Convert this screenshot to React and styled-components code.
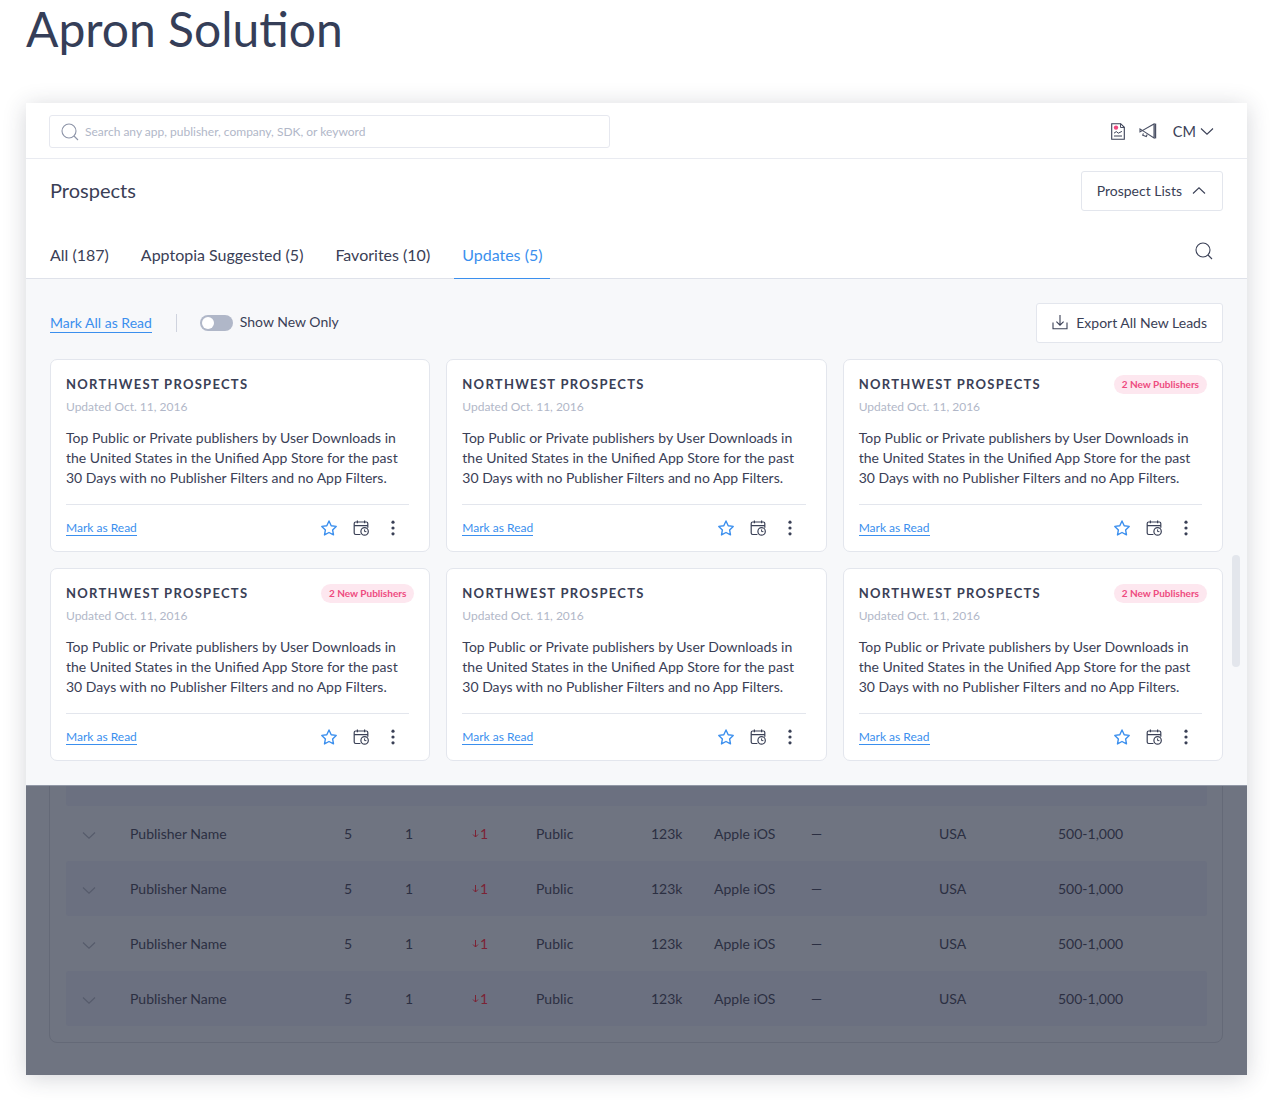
import React from 'react';
import styled, { createGlobalStyle } from 'styled-components';

const Global = createGlobalStyle`
  html, body { margin: 0; padding: 0; background: #fff; }
  body { font-family: Lato, "Open Sans", sans-serif; color: #3a4056; -webkit-font-smoothing: antialiased; }
  * { box-sizing: border-box; }
`;

const Page = styled.div`
  width: 1273px;
  height: 1100px;
  padding: 0 26px;
  overflow: hidden;
`;
const PageTitle = styled.h1`
  margin: 0;
  height: 103px;
  font-family: Lato, sans-serif;
  font-weight: 400;
  font-size: 48px;
  line-height: 58px;
  color: #353e58;
`;
const Frame = styled.div`
  position: relative;
  width: 1221px;
  height: 972px;
  background: #fff;
  box-shadow: 0 3px 22px rgba(40, 45, 65, 0.2);
  display: flex;
  flex-direction: column;
`;
const TopBar = styled.header`
  height: 56px;
  padding: 12px 33px 0 23px;
  border-bottom: 1px solid #e9ebf1;
  display: flex;
  justify-content: space-between;
  align-items: flex-start;
`;
const SearchBox = styled.div`
  width: 561px;
  height: 33px;
  border: 1px solid #e6e8ef;
  border-radius: 3px;
  padding-left: 11px;
  display: flex;
  align-items: center;
  gap: 6px;
  font-size: 12px;
  color: #b1b7c8;
`;
const TopActions = styled.div`
  display: flex;
  align-items: center;
  height: 32px;
  color: #3a4056;
  font-size: 14.5px;
`;
const IconSlot = styled.span`
  display: inline-flex;
  margin-right: ${p => p.$mr || 0}px;
  margin-left: ${p => p.$ml || 0}px;
`;
const TitleRow = styled.div`
  height: 65px;
  padding: 12px 24px 0 24px;
  display: flex;
  justify-content: space-between;
  align-items: flex-start;
`;
const SectionTitle = styled.h2`
  margin: 0;
  height: 40px;
  font-weight: 400;
  font-size: 20px;
  line-height: 38px;
  color: #3a4056;
`;
const OutlineButton = styled.button`
  height: 40px;
  padding: 0 ${p => p.$pr || 15}px 2px 15px;
  border: 1px solid #e3e6ed;
  border-radius: 3px;
  background: #fff;
  font-family: inherit;
  font-size: 14px;
  color: #3a4056;
  display: flex;
  align-items: center;
  gap: ${p => p.$gap || 8}px;
`;
const Tabs = styled.nav`
  height: 55px;
  padding: 0 24px 0 16px;
  border-bottom: 1px solid #dfe2ea;
  display: flex;
  align-items: stretch;
  gap: 16px;
`;
const Tab = styled.a`
  padding: 0 8px;
  height: 55px;
  line-height: 62px;
  font-size: 16px;
  color: ${p => (p.$active ? '#3b8fee' : '#3a4056')};
  border-bottom: ${p => (p.$active ? '1px solid #3b8fee' : '0')};
`;
const TabSearch = styled.span`
  margin-left: auto;
  padding: 18px 10px 0 0;
  display: inline-flex;
`;
const Body = styled.section`
  height: 506px;
  padding: 24px 24px 0;
  background: #f7f8fa;
  position: relative;
`;
const Toolbar = styled.div`
  height: 40px;
  margin-bottom: 16px;
  display: flex;
  align-items: center;
`;
const TextLink = styled.a`
  font-size: ${p => p.$size || 12}px;
  line-height: ${p => p.$lh || 15}px;
  color: #3b8fee;
  border-bottom: 1px solid #3b8fee;
`;
const VDivider = styled.span`
  width: 1px;
  height: 18px;
  margin: 0 23px 0 24px;
  background: #cfd3de;
`;
const Toggle = styled.span`
  width: 33px;
  height: 16px;
  border-radius: 8px;
  background: #b0b7c8;
  padding: 2px;
  margin-right: 7px;
  display: inline-block;
  &::before {
    content: '';
    display: block;
    width: 12px;
    height: 12px;
    border-radius: 50%;
    background: #fff;
  }
`;
const ToggleLabel = styled.span`
  font-size: 14px;
  line-height: 18px;
  padding-bottom: 2px;
  color: #3a4056;
`;
const ExportWrap = styled.div`
  margin-left: auto;
`;
const Grid = styled.div`
  display: grid;
  grid-template-columns: repeat(3, 1fr);
  gap: 16px;
`;
const Card = styled.article`
  height: 193px;
  padding: 15px 15px 0;
  background: #fff;
  border: 1px solid #e3e6ed;
  border-radius: 7px;
`;
const CardHead = styled.div`
  height: 18px;
  display: flex;
  justify-content: space-between;
  align-items: center;
`;
const CardTitle = styled.h3`
  margin: 0;
  font-size: 13px;
  font-weight: 700;
  letter-spacing: 1.28px;
  color: #3a4056;
`;
const Pill = styled.span`
  height: 19px;
  padding: 0 8px;
  border-radius: 10px;
  background: #fde7ef;
  color: #ee4b80;
  font-size: 10px;
  font-weight: 700;
  line-height: 19px;
`;
const CardDate = styled.div`
  margin-top: 5px;
  font-size: 12px;
  line-height: 18px;
  color: #b1b7c8;
`;
const CardText = styled.p`
  margin: 12px 0 16px;
  font-size: 14px;
  line-height: 20px;
  color: #3a4056;
`;
const CardFoot = styled.div`
  height: 46px;
  margin-right: 5px;
  padding-right: 6px;
  border-top: 1px solid #e3e6ed;
  display: flex;
  justify-content: space-between;
  align-items: center;
`;
const FootIcons = styled.div`
  display: flex;
  gap: 12px;
`;
const ScrollThumb = styled.span`
  position: absolute;
  top: 276px;
  right: 7px;
  width: 8px;
  height: 112px;
  border-radius: 4px;
  background: #e3e6ec;
`;
const Dimmed = styled.section`
  flex: 1;
  min-height: 0;
  overflow: hidden;
  background: #6f7481;
  padding: 0 24px 0 23px;
  border-top: 1px solid #9298a6;
`;
const TablePanel = styled.div`
  margin-top: -36px;
  padding: 0 15px 16px 16px;
  border: 1px solid #646977;
  border-radius: 8px;
`;
const Row = styled.div`
  height: 55px;
  margin: 0;
  padding-left: 16px;
  border-radius: 3px;
  background: ${p => (p.$shade ? '#6b7080' : 'transparent')};
  display: grid;
  grid-template-columns: 48px 214px 61px 67px 64px 115px 63px 97px 128px 119px 1fr;
  align-items: center;
  font-size: 14px;
  color: #2b2f42;
`;
const Drop = styled.span`
  color: #7c2335;
  display: inline-flex;
  align-items: center;
  gap: 1px;
`;
const ChevronCell = styled.span`
  display: inline-flex;
  padding-top: 3px;
`;

const Search = ({ size = 18, color = '#8d94a8' }) => (
  <svg width={size} height={size} viewBox="0 0 18 18" fill="none" stroke={color} strokeWidth="1.1">
    <circle cx="8" cy="8" r="7" />
    <path d="M13 13l4 4" />
  </svg>
);
const Chevron = ({ up, w = 14, color = '#3a4056' }) => (
  <svg width={w} height={w / 2} viewBox="0 0 14 7" fill="none" stroke={color} strokeWidth="1.1">
    <path d={up ? 'M1 6.5L7 .8l6 5.7' : 'M1 .5l6 5.7L13 .5'} />
  </svg>
);
const DocIcon = () => (
  <svg width="14" height="17" viewBox="0 0 14 17" fill="none">
    <path d="M.7.7h9l3.6 3.6v12H.7z" fill="#fff" stroke="#3a4056" strokeWidth="1.1" />
    <path d="M9.5.7v3.8h3.8" stroke="#3a4056" strokeWidth=".9" />
    <circle cx="5" cy="4.6" r="2.2" fill="#f0487e" />
    <path d="M3 10.2l2.3-1.6 2 1.6 3.6-1.8M3 13h8" stroke="#3a4056" strokeWidth="1" />
  </svg>
);
const Megaphone = () => (
  <svg width="18" height="16" viewBox="0 0 18 16" fill="none" stroke="#4a5064" strokeWidth="1.1">
    <path d="M1 6.2v3l14-8v14z" transform="translate(0 -.3)" />
    <path d="M16.3 .6v14.8" strokeWidth="1.8" />
    <path d="M4.4 10.4l-.7 1.8 3.6 1.4.9-2" />
  </svg>
);
const Download = () => (
  <svg width="16" height="16" viewBox="0 0 16 16" fill="none" stroke="#3a4056" strokeWidth="1.1">
    <path d="M8 1v10M4.4 7.6L8 11.2l3.6-3.6" />
    <path d="M1 8.5v6.3h14V8.5" />
  </svg>
);
const Star = () => (
  <svg width="20" height="20" viewBox="0 0 20 20" fill="none" stroke="#3b8fee" strokeWidth="1.4" strokeLinejoin="round">
    <path d="M10 3l2.2 4.7 5 .7-3.6 3.5.9 5L10 14.5l-4.5 2.4.9-5L2.8 8.4l5-.7z" />
  </svg>
);
const CalClock = () => (
  <svg width="20" height="20" viewBox="0 0 20 20" fill="none" stroke="#3a4056" strokeWidth="1.2">
    <path d="M9.4 16.5H4.6a1.4 1.4 0 0 1-1.4-1.4V5.4A1.4 1.4 0 0 1 4.6 4h10.8a1.4 1.4 0 0 1 1.4 1.4v4.4" />
    <path d="M3.2 7.6h13.6M6.4 2.6v2.6M13.6 2.6v2.6" />
    <circle cx="13.6" cy="13.4" r="3.7" />
    <path d="M13.6 11.4v2.2h1.8" strokeWidth="1" />
  </svg>
);
const Kebab = () => (
  <svg width="20" height="20" viewBox="0 0 20 20" fill="#3a4056">
    <circle cx="10" cy="4.2" r="1.6" />
    <circle cx="10" cy="10" r="1.6" />
    <circle cx="10" cy="15.8" r="1.6" />
  </svg>
);
const ArrowDown = () => (
  <svg width="7" height="9" viewBox="0 0 7 9" fill="none" stroke="#7c2335" strokeWidth="1">
    <path d="M3.5 1v7M1 5.5L3.5 8 6 5.5" />
  </svg>
);

const cards = [false, false, true, true, false, true];

const ProspectCard = ({ badge }) => (
  <Card>
    <CardHead>
      <CardTitle>NORTHWEST PROSPECTS</CardTitle>
      {badge && <Pill>2 New Publishers</Pill>}
    </CardHead>
    <CardDate>Updated Oct. 11, 2016</CardDate>
    <CardText>
      Top Public or Private publishers by User Downloads in the United States in the Unified App Store for the past 30 Days with no Publisher Filters and no App Filters.
    </CardText>
    <CardFoot>
      <TextLink>Mark as Read</TextLink>
      <FootIcons>
        <Star />
        <CalClock />
        <Kebab />
      </FootIcons>
    </CardFoot>
  </Card>
);

const PublisherRow = ({ shade }) => (
  <Row $shade={shade}>
    <ChevronCell><Chevron color="#565b6b" /></ChevronCell>
    <span>Publisher Name</span>
    <span>5</span>
    <span>1</span>
    <Drop><ArrowDown />1</Drop>
    <span>Public</span>
    <span>123k</span>
    <span>Apple iOS</span>
    <span>—</span>
    <span>USA</span>
    <span>500-1,000</span>
  </Row>
);

export default function App() {
  return (
    <Page>
      <Global />
      <PageTitle>Apron Solution</PageTitle>
      <Frame>
        <TopBar>
          <SearchBox>
            <Search />
            <span>Search any app, publisher, company, SDK, or keyword</span>
          </SearchBox>
          <TopActions>
            <IconSlot $mr={14}><DocIcon /></IconSlot>
            <IconSlot $mr={16}><Megaphone /></IconSlot>
            <span>CM</span>
            <IconSlot $ml={4}><Chevron /></IconSlot>
          </TopActions>
        </TopBar>
        <TitleRow>
          <SectionTitle>Prospects</SectionTitle>
          <OutlineButton $gap={10} $pr={16}>Prospect Lists <Chevron up /></OutlineButton>
        </TitleRow>
        <Tabs>
          <Tab>All (187)</Tab>
          <Tab>Apptopia Suggested (5)</Tab>
          <Tab>Favorites (10)</Tab>
          <Tab $active>Updates (5)</Tab>
          <TabSearch><Search color="#3a4056" /></TabSearch>
        </Tabs>
        <Body>
          <Toolbar>
            <TextLink $size={14} $lh={18}>Mark All as Read</TextLink>
            <VDivider />
            <Toggle />
            <ToggleLabel>Show New Only</ToggleLabel>
            <ExportWrap>
              <OutlineButton><Download /> Export All New Leads</OutlineButton>
            </ExportWrap>
          </Toolbar>
          <Grid>
            {cards.map((b, i) => <ProspectCard key={i} badge={b} />)}
          </Grid>
          <ScrollThumb />
        </Body>
        <Dimmed>
          <TablePanel>
            <PublisherRow shade />
            <PublisherRow />
            <PublisherRow shade />
            <PublisherRow />
            <PublisherRow shade />
          </TablePanel>
        </Dimmed>
      </Frame>
    </Page>
  );
}
